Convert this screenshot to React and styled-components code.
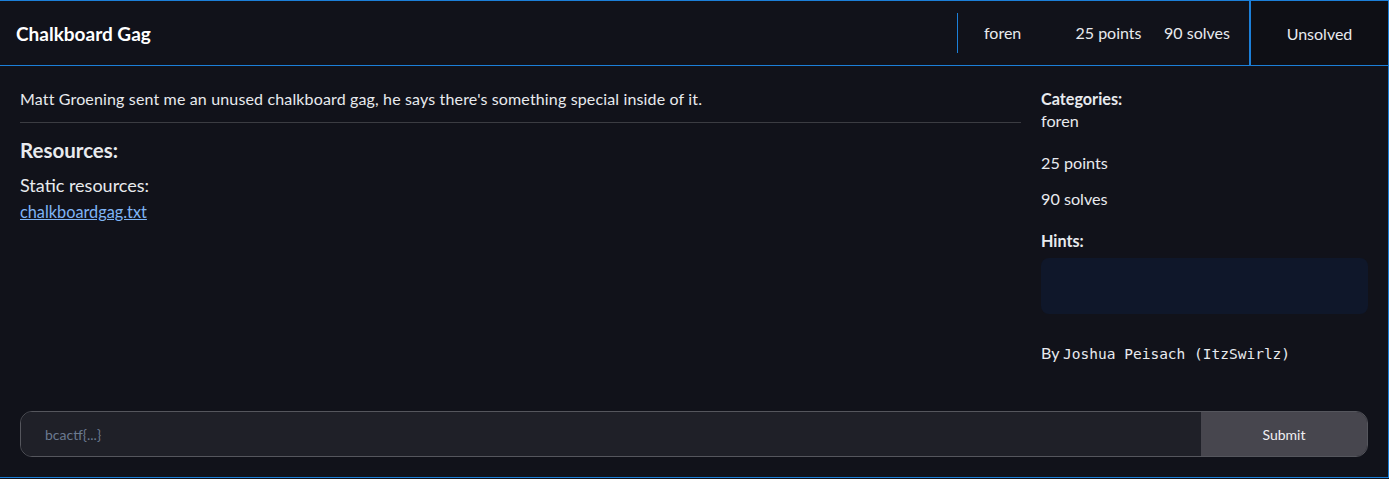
import styled, { createGlobalStyle } from "styled-components";

const GlobalStyle = createGlobalStyle`
  html, body {
    margin: 0;
    padding: 0;
    background: #11121a;
  }
  body {
    font-family: "Lato", "Noto Sans", sans-serif;
    color: #e8eaee;
  }
`;

const Card = styled.div`
  width: 1389px;
  height: 478px;
  box-sizing: border-box;
  border: 1px solid #1c7fd8;
  border-left: none;
  background: #11121a;
  display: flex;
  flex-direction: column;
`;

const Header = styled.div`
  height: 64px;
  display: flex;
  align-items: center;
  border-bottom: 1px solid #1c7fd8;
`;

const Title = styled.h2`
  flex: 1;
  margin: 0;
  padding-left: 16px;
  font-size: 19px;
  font-weight: 700;
  color: #ffffff;
`;

const Divider = styled.div`
  width: 1px;
  height: 40px;
  background: #1c7fd8;
  margin-right: 26px;
`;

const Meta = styled.span`
  width: ${(p) => p.w}px;
  text-align: ${(p) => p.align || "center"};
  font-size: 16px;
  color: #e8eaee;
  margin-top: -1px;
`;

const Status = styled.div`
  width: 137px;
  height: 100%;
  display: flex;
  align-items: center;
  justify-content: center;
  border-left: 2px solid #1c7fd8;
  background: #0e0f15;
  margin-left: 10px;
  font-size: 16px;
`;

const Body = styled.div`
  flex: 1;
  display: grid;
  grid-template-columns: 1fr 327px;
  column-gap: 20px;
  padding: 22px 20px 0 20px;
`;

const Main = styled.div`
  display: flex;
  flex-direction: column;
`;

const Desc = styled.p`
  margin: 0;
  font-size: 16px;
  letter-spacing: 0.15px;
  line-height: 22px;
  padding-bottom: 12px;
  border-bottom: 1px solid #3b3c42;
`;

const SectionTitle = styled.h3`
  margin: 15px 0 9px;
  font-size: 20.5px;
  font-weight: 700;
`;

const ResLabel = styled.div`
  font-size: 18px;
  line-height: 28px;
`;

const Link = styled.a`
  font-size: 16.3px;
  line-height: 25px;
  color: #7fb4f5;
  text-decoration: underline;
`;

const Side = styled.div`
  display: flex;
  flex-direction: column;
`;

const Label = styled.div`
  font-size: 16.2px;
  font-weight: 700;
  line-height: 22px;
  margin-top: ${(p) => p.mt || 0}px;
`;

const Value = styled.div`
  font-size: 16.2px;
  line-height: 22px;
  margin-top: ${(p) => p.mt || 0}px;
`;

const HintBox = styled.div`
  height: 56px;
  margin-top: 6px;
  border-radius: 8px;
  background: #0f172a;
`;

const Author = styled.div`
  margin-top: 28px;
  font-size: 16px;
  line-height: 22px;
`;

const Mono = styled.span`
  font-family: "DejaVu Sans Mono", monospace;
  font-size: 14.5px;
`;

const Form = styled.form`
  display: flex;
  height: 46px;
  margin: 0 20px 20px 20px;
  border: 1px solid #55565d;
  border-radius: 12px;
  overflow: hidden;
  box-sizing: border-box;
`;

const Input = styled.input`
  flex: 1;
  border: none;
  outline: none;
  background: #1f2028;
  padding: 0 24px;
  font-family: "Lato", sans-serif;
  font-size: 14px;
  color: #e8eaee;
  &::placeholder {
    color: #6b7a90;
  }
`;

const Submit = styled.button`
  width: 166px;
  border: none;
  background: #47464e;
  color: #f0f0f3;
  font-family: "Lato", sans-serif;
  font-size: 14px;
`;

export default function App() {
  return (
    <>
      <GlobalStyle />
      <Card>
        <Header>
          <Title>Chalkboard Gag</Title>
          <Divider />
          <Meta w={78} align="left">foren</Meta>
          <Meta w={93}>25 points</Meta>
          <Meta w={84}>90 solves</Meta>
          <Status>Unsolved</Status>
        </Header>
        <Body>
          <Main>
            <Desc>
              Matt Groening sent me an unused chalkboard gag, he says there's
              something special inside of it.
            </Desc>
            <SectionTitle>Resources:</SectionTitle>
            <ResLabel>Static resources:</ResLabel>
            <div>
              <Link href="#">chalkboardgag.txt</Link>
            </div>
          </Main>
          <Side>
            <Label>Categories:</Label>
            <Value>foren</Value>
            <Value mt={20}>25 points</Value>
            <Value mt={14}>90 solves</Value>
            <Label mt={20}>Hints:</Label>
            <HintBox />
            <Author>
              By <Mono>Joshua Peisach (ItzSwirlz)</Mono>
            </Author>
          </Side>
        </Body>
        <Form onSubmit={(e) => e.preventDefault()}>
          <Input placeholder="bcactf{...}" />
          <Submit type="submit">Submit</Submit>
        </Form>
      </Card>
    </>
  );
}
